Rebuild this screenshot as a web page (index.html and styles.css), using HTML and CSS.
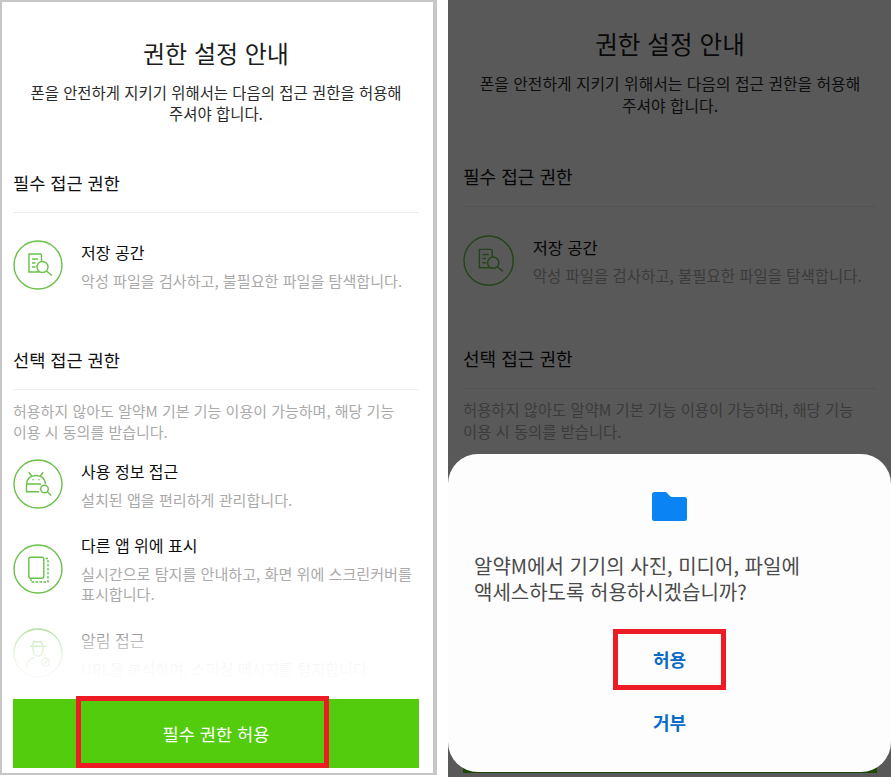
FILE: index.html
```html
<!DOCTYPE html>
<html lang="ko">
<head>
<meta charset="utf-8">
<title>권한 설정 안내</title>
<link rel="stylesheet" href="styles.css">
</head>
<body>
<main class="page">
  <section class="phone phone-left">
    <div class="content">
      <h1 class="title">권한 설정 안내</h1>
      <p class="lead">폰을 안전하게 지키기 위해서는 다음의 접근 권한을 허용해<br>주셔야 합니다.</p>
      <h2 class="heading heading-first">필수 접근 권한</h2>
      <div class="item item-first">
        <svg class="icon" viewBox="0 0 50 50"><circle cx="25" cy="25" r="24"/><path d="M26.500 32H16V14h11.500l1 1v6.500M19 19h6M19 23h3.500M19 27h3.500"/><circle cx="29.500" cy="27" r="5.500"/><path d="M33.500 31l5.500 4.500"/></svg>
        <div class="text">
          <h3 class="name">저장 공간</h3>
          <p class="desc">악성 파일을 검사하고, 불필요한 파일을 탐색합니다.</p>
        </div>
      </div>
      <h2 class="heading heading-second">선택 접근 권한</h2>
      <p class="note">허용하지 않아도 알약M 기본 기능 이용이 가능하며, 해당 기능<br>이용 시 동의를 받습니다.</p>
      <div class="item item-after-note">
        <svg class="icon" viewBox="0 0 50 50"><circle cx="25" cy="25" r="24"/><path d="M15.800 13.300l3.200 4M30.200 13.300l-3.200 4M13.500 25c0-5 4-8.500 9.500-8.500s9.500 3.500 9.500 8.500M13.500 25h14.500M13.500 25v7.700H26"/><circle cx="31.500" cy="30" r="3.800"/><path d="M34.300 32.700l4 3.800"/><circle class="dot" cx="20" cy="20.800" r=".8"/><circle class="dot" cx="26" cy="20.800" r=".8"/></svg>
        <div class="text">
          <h3 class="name">사용 정보 접근</h3>
          <p class="desc">설치된 앱을 편리하게 관리합니다.</p>
        </div>
      </div>
      <div class="item">
        <svg class="icon" viewBox="0 0 50 50"><circle cx="25" cy="25" r="24"/><rect x="15.800" y="13.300" width="15" height="21" rx="2"/><path class="dash" d="M32.500 14.500H35V38H18v-3"/></svg>
        <div class="text">
          <h3 class="name">다른 앱 위에 표시</h3>
          <p class="desc">실시간으로 탐지를 안내하고, 화면 위에 스크린커버를<br>표시합니다.</p>
        </div>
      </div>
      <div class="item">
        <svg class="icon" viewBox="0 0 50 50"><circle cx="25" cy="25" r="24"/><path d="M17 18.300h16.500M19.500 18.300l1-4.500h8l1 4.500M20 18.300v4c0 3.500 2.500 6 5 6s5-2.500 5-6v-4M13.500 39c0-5 3-8 8-9.500"/><circle cx="32.500" cy="34.300" r="4"/><path d="M29.700 37l5.600-5.500"/></svg>
        <div class="text">
          <h3 class="name">알림 접근</h3>
          <p class="desc">URL을 분석하여, 스미싱 메시지를 탐지합니다.</p>
        </div>
      </div>
      <div class="fade"></div>
    </div>
    <div class="action">
      <button class="primary">필수 권한 허용</button>
      <span class="mark mark-primary"></span>
    </div>
  </section>

  <section class="phone phone-right">
    <div class="content">
      <h1 class="title">권한 설정 안내</h1>
      <p class="lead">폰을 안전하게 지키기 위해서는 다음의 접근 권한을 허용해<br>주셔야 합니다.</p>
      <h2 class="heading heading-first">필수 접근 권한</h2>
      <div class="item item-first">
        <svg class="icon" viewBox="0 0 50 50"><circle cx="25" cy="25" r="24"/><path d="M26.500 32H16V14h11.500l1 1v6.500M19 19h6M19 23h3.500M19 27h3.500"/><circle cx="29.500" cy="27" r="5.500"/><path d="M33.500 31l5.500 4.500"/></svg>
        <div class="text">
          <h3 class="name">저장 공간</h3>
          <p class="desc">악성 파일을 검사하고, 불필요한 파일을 탐색합니다.</p>
        </div>
      </div>
      <h2 class="heading heading-second">선택 접근 권한</h2>
      <p class="note">허용하지 않아도 알약M 기본 기능 이용이 가능하며, 해당 기능<br>이용 시 동의를 받습니다.</p>
    </div>
    <div class="action">
      <div class="primary"></div>
    </div>
    <div class="dim"></div>
    <div class="sheet">
      <svg class="folder" viewBox="0 0 35 29"><path d="M0 2.500A2.500 2.500 0 0 1 2.500 0H14l5 5h13.500A2.500 2.500 0 0 1 35 7.500V26.500A2.500 2.500 0 0 1 32.500 29H2.500A2.500 2.500 0 0 1 0 26.500Z"/></svg>
      <p class="question">알약M에서 기기의 사진, 미디어, 파일에<br>액세스하도록 허용하시겠습니까?</p>
      <div class="choice">
        <button class="link">허용</button>
        <span class="mark"></span>
      </div>
      <div class="choice choice-deny">
        <button class="link">거부</button>
      </div>
    </div>
  </section>
</main>
</body>
</html>
```

FILE: styles.css
```css
* { box-sizing: border-box; }

html, body { margin: 0; padding: 0; background: #fff; }

body {
  font-family: "Noto Sans CJK KR", "Noto Sans", sans-serif;
  overflow: hidden;
}

h1, h2, h3, p { margin: 0; font-weight: 400; }

.page {
  display: flex;
  width: 891px;
  height: 777px;
  background: #fff;
}

.phone {
  --s: 1;
  position: relative;
  display: flex;
  flex-direction: column;
  background: #fff;
  overflow: hidden;
}

.phone-left {
  width: 437px;
  height: 775px;
  border-style: solid;
  border-color: #c6c6c6;
  border-width: 2px 4px 2px 2px;
  padding: 35px 14px 5px 11px;
}

.phone-right {
  --s: 1.025;
  width: 443px;
  height: 777px;
  margin-left: 11px;
  padding: 27px 14px 4px 15px;
}

.content {
  position: relative;
  flex: 1;
  min-height: 0;
}

.title {
  font-size: calc(24px * var(--s));
  line-height: calc(32px * var(--s));
  color: #1c1c1c;
  text-align: center;
}

.lead {
  margin-top: calc(13px * var(--s));
  font-size: calc(15.450px * var(--s));
  line-height: calc(21px * var(--s));
  color: #2a2a2a;
  text-align: center;
}

.heading {
  font-size: calc(17.600px * var(--s));
  line-height: calc(24px * var(--s));
  color: #111111;
  padding-bottom: calc(17px * var(--s));
  border-bottom: 1px solid #eeeeee;
}

.heading-first { margin-top: calc(47px * var(--s)); }
.heading-second { margin-top: calc(58px * var(--s)); }

.note {
  margin-top: calc(10px * var(--s));
  font-size: calc(15px * var(--s));
  line-height: calc(21px * var(--s));
  color: #aaaaaa;
}

.item {
  display: flex;
  align-items: center;
  gap: calc(18px * var(--s));
  margin-top: calc(25px * var(--s));
}

.item-first { margin-top: calc(27px * var(--s)); }
.item-after-note { margin-top: calc(17px * var(--s)); }

.icon {
  flex: none;
  width: calc(50px * var(--s));
  height: calc(50px * var(--s));
  fill: none;
  stroke: #68c148;
  stroke-width: 1.400;
}

.icon .dot { fill: #68c148; stroke: none; }
.icon .dash { stroke-dasharray: 2.500 1.500; }

.name {
  font-size: calc(16px * var(--s));
  line-height: calc(23px * var(--s));
  color: #0c0c0c;
}

.desc {
  margin-top: calc(6px * var(--s));
  font-size: calc(15.100px * var(--s));
  line-height: calc(20px * var(--s));
  color: #aaaaaa;
}

.fade {
  position: absolute;
  left: 0;
  right: 0;
  top: 566px;
  height: 90px;
  background: linear-gradient(to bottom, rgba(255,255,255,0), rgba(255,255,255,.7) 42%, rgba(255,255,255,.93) 72%, #fff);
}

.action {
  position: relative;
  flex: none;
}

.primary {
  display: block;
  width: 100%;
  height: 69px;
  border: 0;
  padding: 0;
  background: #52cc0c;
  color: #fff;
  font: inherit;
  font-size: 17.600px;
}

.mark {
  position: absolute;
  inset: 0;
  border: 5px solid #ed1c24;
  pointer-events: none;
}

.mark-primary {
  inset: -3px auto 0 63px;
  width: 253px;
}

.dim {
  position: absolute;
  inset: 0;
  background: rgba(0, 0, 0, 0.65);
}

.sheet {
  position: absolute;
  left: 0;
  right: 0;
  top: 454px;
  height: 318px;
  padding: 38px 26px 0;
  display: flex;
  flex-direction: column;
  background: #fdfdfd;
  border-radius: 30px;
}

.folder {
  align-self: center;
  width: 35px;
  height: 29px;
  fill: #0a84f5;
}

.question {
  margin-top: 32px;
  font-size: 20px;
  line-height: 26px;
  color: #4a4a4a;
}

.choice {
  position: relative;
  align-self: center;
  width: 113px;
  height: 61px;
  margin-top: 24px;
}

.choice-deny { margin-top: 2px; }

.link {
  display: block;
  width: 100%;
  height: 100%;
  border: 0;
  padding: 0 0 2px;
  background: none;
  color: #0a6cc4;
  font: inherit;
  font-size: 18px;
  font-weight: 700;
}
```
